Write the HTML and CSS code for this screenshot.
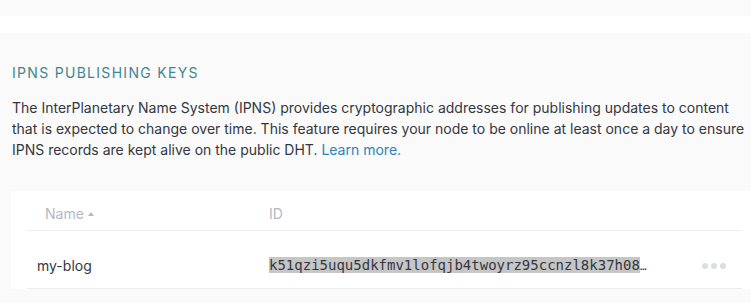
FILE: index.html
```html
<!DOCTYPE html>
<html>
<head>
<meta charset="utf-8">
<link rel="stylesheet" href="styles.css">
</head>
<body>
<div class="topband"></div>
<div class="spacer"></div>
<section class="panel">
  <h2 class="title">IPNS Publishing Keys</h2>
  <p class="desc">The InterPlanetary Name System (IPNS) provides cryptographic addresses for publishing updates to content that is expected to change over time. This feature requires your node to be online at least once a day to ensure IPNS records are kept alive on the public DHT. <a class="link" href="#">Learn more.</a></p>
  <div class="table">
    <div class="row head">
      <div class="cell name hname">Name <span class="sort"></span></div>
      <div class="cell id">ID</div>
    </div>
    <div class="row body">
      <div class="cell name">my-blog</div>
      <div class="cell id"><div class="idtext"><span class="sel">k51qzi5uqu5dkfmv1lofqjb4twoyrz95ccnzl8k37h08</span><span class="ell">…</span></div></div>
      <div class="cell more"><span class="dot"></span><span class="dot"></span><span class="dot"></span></div>
    </div>
  </div>
</section>
</body>
</html>
```

FILE: styles.css
```css
html, body {
  margin: 0;
  padding: 0;
  background: #ffffff;
}
body {
  font-family: Inter, "Noto Sans", sans-serif;
  color: #34373f;
  overflow: hidden;
  height: 303px;
}
.topband {
  height: 16px;
  background: #fafafa;
}
.spacer {
  height: 17px;
}
.panel {
  background: #fafafa;
  padding: 30px 0 0 11px;
  height: 270px;
  box-sizing: border-box;
  overflow: hidden;
}
.title {
  margin: 0 0 0 1px;
  font-size: 14px;
  font-weight: 400;
  text-transform: uppercase;
  letter-spacing: 1.3px;
  color: #3f8790;
  line-height: 20px;
}
.desc {
  margin: 14px 0 0 1px;
  width: 745px;
  font-size: 14px;
  letter-spacing: 0;
  line-height: 21px;
  color: #34373f;
}
.link {
  color: #2b86b8;
  text-decoration: none;
}
.table {
  margin-top: 31px;
  background: #ffffff;
  padding: 0 9px 0 16px;
}
.row {
  display: flex;
  align-items: center;
  border-bottom: 1px solid #ebedef;
}
.row.head {
  height: 34px;
  padding-top: 5px;
  font-size: 14px;
  color: #b4b8c2;
}
.row.body {
  height: 45px;
  padding-top: 12px;
  font-size: 14px;
}
.cell.name {
  width: 232px;
  padding-left: 10px;
}
.hname {
  padding-left: 18px !important;
  width: 224px !important;
  display: flex;
  align-items: center;
  gap: 4px;
}
.sort {
  width: 0;
  height: 0;
  border-left: 3px solid transparent;
  border-right: 3px solid transparent;
  border-bottom: 4px solid #b4b8c2;
  margin-top: 2px;
}
.cell.id {
  width: 382px;
}
.idtext {
  font-family: "DejaVu Sans Mono", monospace;
  font-size: 14px;
  white-space: nowrap;
  width: 390px;
}
.sel {
  background: #c6c6c6;
  line-height: 19px;
}
.ell {
  font-size: 11px;
}
.cell.more {
  margin-left: auto;
  margin-right: 16px;
  display: flex;
  gap: 3px;
}
.dot {
  width: 6px;
  height: 6px;
  border-radius: 50%;
  background: #dadde2;
}
```
